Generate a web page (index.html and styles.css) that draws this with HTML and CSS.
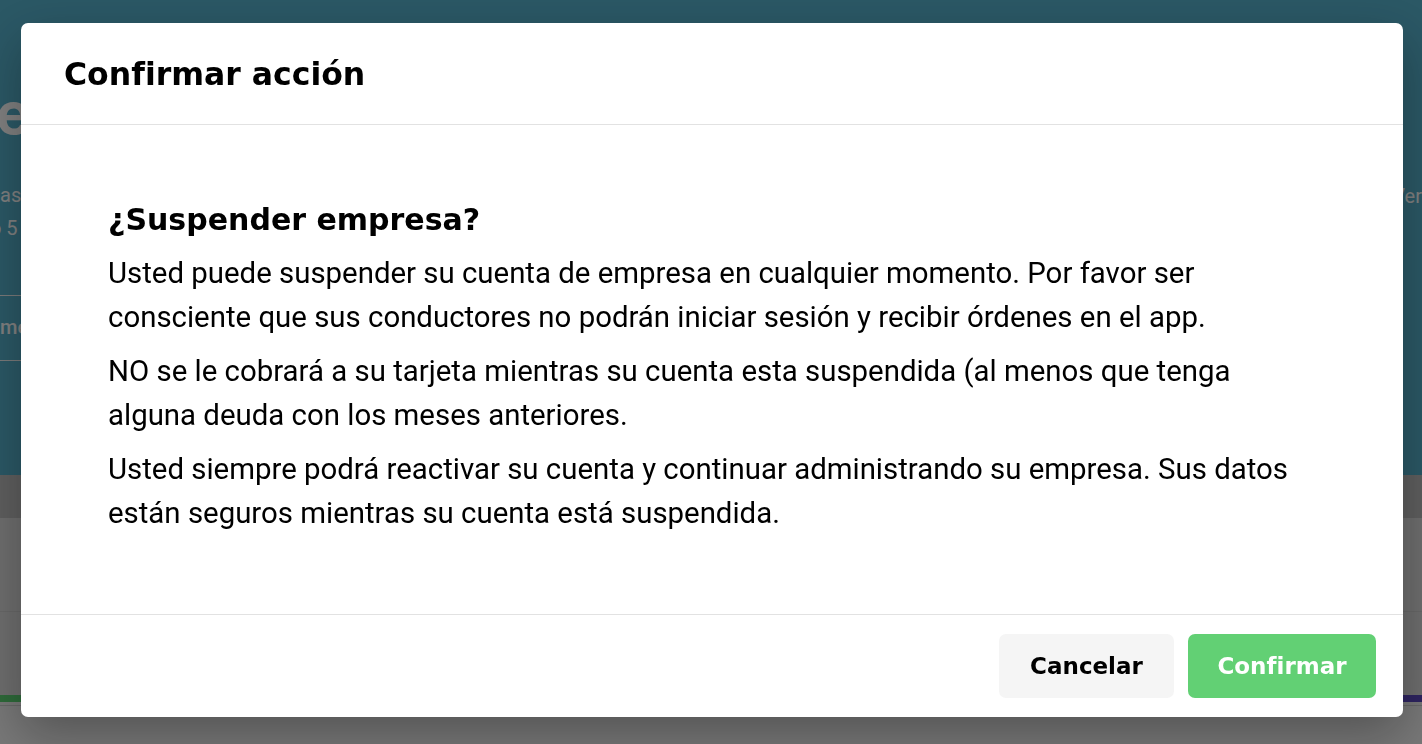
FILE: index.html
```html
<!DOCTYPE html>
<html lang="es">
<head>
    <meta charset="UTF-8">
    <title>Confirmar acción</title>
    <link rel="stylesheet" href="styles.css">
</head>
<body>
<div class="page">
    <div class="hero">
        <div class="hero-left">
            <div class="hero-title">empresa</div>
            <div class="hero-info hero-info-a">as flota</div>
            <div class="hero-info hero-info-b">o 5 vehículos</div>
            <div class="hero-tabs">
                <span>mes actual</span>
            </div>
        </div>
        <div class="hero-right">
            <div class="hero-info">Ver</div>
        </div>
    </div>
    <div class="toolbar"></div>
    <div class="list">
        <div class="list-row"></div>
        <div class="list-row"></div>
    </div>
    <div class="bars">
        <div class="bar bar-green"></div>
        <div class="bar bar-purple"></div>
    </div>
</div>

<div class="overlay">
    <div class="modal">
        <div class="modal-header">
            <h2>Confirmar acción</h2>
        </div>
        <div class="modal-body">
            <h3>¿Suspender empresa?</h3>
            <p>Usted puede suspender su cuenta de empresa en cualquier momento. Por favor ser consciente que sus conductores no podrán iniciar sesión y recibir órdenes en el app.</p>
            <p>NO se le cobrará a su tarjeta mientras su cuenta esta suspendida (al menos que tenga alguna deuda con los meses anteriores.</p>
            <p>Usted siempre podrá reactivar su cuenta y continuar administrando su empresa. Sus datos están seguros mientras su cuenta está suspendida.</p>
        </div>
        <div class="modal-footer">
            <button class="btn btn-cancel">Cancelar</button>
            <button class="btn btn-confirm">Confirmar</button>
        </div>
    </div>
</div>
</body>
</html>
```

FILE: styles.css
```css
* {
    padding: 0;
    margin: 0;
    box-sizing: border-box;
}

body {
    width: 1422px;
    height: 744px;
    overflow: hidden;
    font-family: Roboto, "Liberation Sans", sans-serif;
    background: #f0f0f0;
}

/* pagina de fondo */
.page {
    height: 744px;
    display: flex;
    flex-direction: column;
}

.hero {
    height: 475px;
    background: #56b0cb;
    display: flex;
    justify-content: space-between;
    color: #fff;
}

.hero-left {
    width: 600px;
    padding-top: 88px;
}

.hero-title {
    font-family: Inter, sans-serif;
    font-weight: 700;
    font-size: 58px;
    line-height: 50px;
    margin-left: -4px;
}

.hero-info {
    font-size: 20px;
    line-height: 33px;
    color: #fff;
}

.hero-info-a {
    margin-top: 41px;
}

.hero-info-b {
    margin-left: -10px;
}

.hero-tabs {
    margin-top: 50px;
    border-top: 1px solid #f4f4f4;
    border-bottom: 1px solid #f4f4f4;
    height: 66px;
    line-height: 62px;
    font-size: 20px;
    font-weight: 500;
}

.hero-right {
    width: 200px;
    padding-top: 180px;
    text-align: right;
}

.toolbar {
    height: 43px;
    background: #bdbdbd;
}

.list {
    background: #dcdcdc;
    height: 177px;
}

.list-row {
    height: 94px;
    border-bottom: 1px solid #cfcfcf;
}

.bars {
    display: flex;
    justify-content: space-between;
    height: 7px;
}

.bar {
    width: 60px;
    height: 7px;
}

.bar-green {
    background: #5cd474;
}

.bar-purple {
    background: #5c48c0;
}

/* capa del modal */
.overlay {
    position: fixed;
    left: 0;
    top: 0;
    width: 100%;
    height: 100%;
    background: rgba(0, 0, 0, 0.5);
    padding: 23px 19px 27px 21px;
}

.modal {
    height: 694px;
    background: #fff;
    border-radius: 7px;
    display: flex;
    flex-direction: column;
    box-shadow: 0 18px 50px rgba(0, 0, 0, 0.3);
}

.modal-header {
    height: 102px;
    padding: 31px 43px 0;
    border-bottom: 1px solid #e2e2e2;
}

.modal-header h2 {
    font-family: "DejaVu Sans", sans-serif;
    font-weight: 700;
    font-size: 31.5px;
    line-height: 40px;
    color: #000;
}

.modal-body {
    flex: 1;
    padding: 77px 103px 0 87px;
}

.modal-body h3 {
    font-family: "DejaVu Sans", sans-serif;
    font-weight: 700;
    font-size: 30px;
    line-height: 36px;
    color: #000;
    margin-bottom: 13px;
}

.modal-body p {
    font-size: 29.4px;
    line-height: 44px;
    color: #000;
    margin-bottom: 10px;
}

.modal-footer {
    height: 103px;
    border-top: 1px solid #e2e2e2;
    padding: 19px 27px 0;
    display: flex;
    justify-content: flex-end;
    gap: 14px;
}

.btn {
    height: 64px;
    border: 0;
    border-radius: 7px;
    font-family: "DejaVu Sans", sans-serif;
    font-weight: 700;
    font-size: 23px;
    cursor: pointer;
}

.btn-cancel {
    width: 175px;
    background: #f5f5f5;
    color: #000;
}

.btn-confirm {
    width: 188px;
    background: #62d074;
    color: #fff;
}
```
